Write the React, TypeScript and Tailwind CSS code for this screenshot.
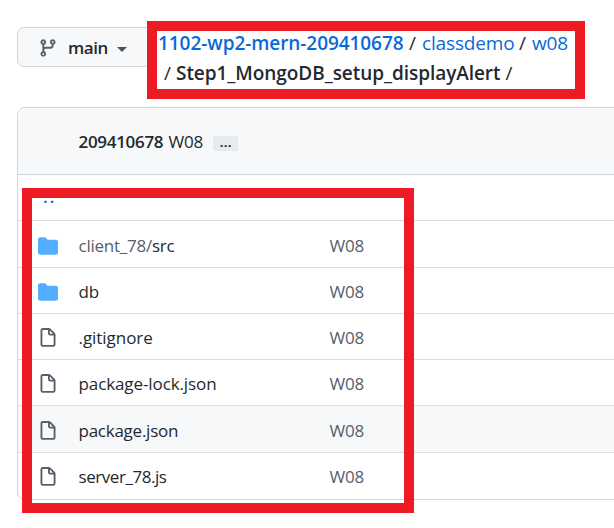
import React from "react";

type Entry = {
  kind: "folder" | "file";
  muted?: string;
  name: string;
  nameClass: string;
  rowClass: string;
};

const entries: Entry[] = [
  { kind: "folder", muted: "client_78/", name: "src", nameClass: "tracking-[-0.25px]", rowClass: "h-[47px] pt-[15px]" },
  { kind: "folder", name: "db", nameClass: "tracking-[-0.2px]", rowClass: "h-[46px] pt-[14px]" },
  { kind: "file", name: ".gitignore", nameClass: "tracking-[-0.05px]", rowClass: "h-[46px] pt-[14px]" },
  { kind: "file", name: "package-lock.json", nameClass: "tracking-[-0.1px]", rowClass: "h-[46px] pt-[14px]" },
  { kind: "file", name: "package.json", nameClass: "tracking-[-0.25px]", rowClass: "h-[47px] pt-[15px] bg-[#f6f8fa]" },
  { kind: "file", name: "server_78.js", nameClass: "tracking-[-0.45px]", rowClass: "h-[46px] pt-[14px]" },
];

function BranchIcon() {
  return (
    <svg width="20" height="20" viewBox="0 0 16 16" fill="#57606a" className="shrink-0">
      <path
        fillRule="evenodd"
        d="M11.75 2.5a.75.75 0 100 1.5.75.75 0 000-1.5zm-2.25.75a2.25 2.25 0 113 2.122V6A2.5 2.5 0 0110 8.5H6a1 1 0 00-1 1v1.128a2.251 2.251 0 11-1.5 0V5.372a2.25 2.25 0 111.5 0v1.836A2.492 2.492 0 016 7h4a1 1 0 001-1v-.628A2.25 2.25 0 019.5 3.25zM4.25 12a.75.75 0 100 1.5.75.75 0 000-1.5zM3.5 3.25a.75.75 0 111.5 0 .75.75 0 01-1.5 0z"
      />
    </svg>
  );
}

function EntryIcon({ kind }: { kind: Entry["kind"] }) {
  return kind === "folder" ? (
    <svg width="20" height="20" viewBox="0 0 16 16" fill="#54aeff" className="shrink-0">
      <path d="M1.75 1A1.75 1.75 0 000 2.75v10.5C0 14.216.784 15 1.75 15h12.5A1.75 1.75 0 0016 13.25v-8.5A1.75 1.75 0 0014.25 3h-6.5a.25.25 0 01-.2-.1l-.9-1.2c-.33-.44-.85-.7-1.4-.7h-3.5z" />
    </svg>
  ) : (
    <svg width="20" height="20" viewBox="0 0 16 16" fill="#57606a" className="shrink-0">
      <path
        fillRule="evenodd"
        d="M3.75 1.5a.25.25 0 00-.25.25v11.5c0 .138.112.25.25.25h8.5a.25.25 0 00.25-.25V6H9.75A1.75 1.75 0 018 4.25V1.5H3.75zm5.75.56v2.19c0 .138.112.25.25.25h2.19L9.5 2.06zM2 1.75C2 .784 2.784 0 3.75 0h5.086c.464 0 .909.184 1.237.513l3.414 3.414c.329.328.513.773.513 1.237v8.086A1.75 1.75 0 0112.25 15h-8.5A1.75 1.75 0 012 13.25V1.75z"
      />
    </svg>
  );
}

export default function App() {
  return (
    <div className="relative h-[528px] w-[614px] overflow-hidden bg-white font-['Open_Sans','Noto_Sans',sans-serif] text-[17px] leading-5 text-[#24292f]">
      <header className="flex h-[107px] items-start pl-[17px] pt-[21px]">
        <button className="mt-[6px] flex h-10 w-[136px] shrink-0 items-center rounded-[7px] border border-[#d5d8da] bg-[#f6f8fa] pl-5 pt-[2px]">
          <BranchIcon />
          <span className="ml-[10px] w-[49px] text-left font-[570] tracking-[-0.4px]">main</span>
          <svg width="10" height="5" viewBox="0 0 10 5" fill="#4c5157" className="mt-[2px]">
            <path d="M0 0h10L5 5z" />
          </svg>
        </button>

        <nav className="relative -ml-[6px] flex h-[78px] w-[438px] shrink-0 flex-col border-10 border-[#ed1c24] bg-white text-[19px] leading-[30px]">
          <div className="-mt-[3px] flex whitespace-pre pl-px">
            <span className="w-[251px] font-[570] tracking-[-0.07px] text-[#0969da]">1102-wp2-mern-209410678</span>
            <span className="w-[13px]">/</span>
            <span className="w-[97px] tracking-[-0.15px] text-[#0969da]">classdemo</span>
            <span className="w-[13px]">/</span>
            <span className="tracking-[-0.2px] text-[#0969da]">w08</span>
          </div>
          <div className="flex whitespace-pre pl-[7px]">
            <span className="w-[12px]">/</span>
            <span className="w-[329.5px] font-[570] tracking-[-0.06px]">Step1_MongoDB_setup_displayAlert</span>
            <span>/</span>
          </div>
        </nav>
      </header>

      <main className="ml-[17px] h-[393px] w-[640px] overflow-hidden rounded-lg border border-[#d0d7de]">
        <div className="flex h-[67px] items-center border-b border-[#d0d7de] bg-[#f6f8fa] pl-[60.5px] pt-px">
          <span className="w-[90px] font-[570] tracking-[-0.3px]">209410678</span>
          <span className="w-[44.5px] tracking-[-0.2px]">W08</span>
          <span className="mt-[4px] flex h-[15px] w-[25px] justify-center rounded-[1px] bg-[#e7ebf0] text-[15px] font-semibold leading-[10px]">…</span>
        </div>
        <div className="h-[46px] border-b border-[#d8dee4] pl-[25px] pt-[12px] font-semibold tracking-[2px] text-[#0969da]">..</div>
        {entries.map((entry) => (
          <div
            key={entry.name}
            className={`flex items-start border-b border-[#d8dee4] pl-5 last:border-b-0 ${entry.rowClass}`}
          >
            <EntryIcon kind={entry.kind} />
            <span className={`ml-[20.5px] w-[251px] whitespace-nowrap ${entry.nameClass}`}>
              {entry.muted && <span className="text-[#57606a]">{entry.muted}</span>}
              {entry.name}
            </span>
            <span className="tracking-[-0.2px] text-[#57606a]">W08</span>
          </div>
        ))}
      </main>

      <div className="pointer-events-none absolute left-[22px] top-[188px] h-[325px] w-[392px] border-10 border-[#ed1c24]" />
    </div>
  );
}
